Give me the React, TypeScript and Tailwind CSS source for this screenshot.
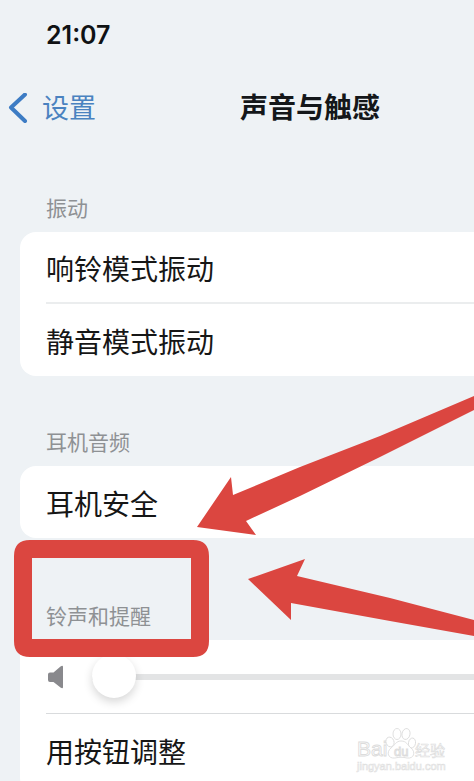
import React from "react";

function Chevron() {
  return (
    <svg width="20" height="32" viewBox="0 0 20 32" fill="none" aria-hidden="true">
      <path d="M17 1.5 L3 14.500 L17 28" stroke="#3d7cc4" strokeWidth="4" strokeLinecap="round" strokeLinejoin="round" />
    </svg>
  );
}

function Speaker() {
  return (
    <svg width="18" height="26" viewBox="0 0 18 26" aria-hidden="true">
      <path d="M4 8.5 H7.5 L14.5 2.5 Q17 0.8 17 3 V23 Q17 25.2 14.5 23.5 L7.5 18 H4 Q2 18 2 16 V10.5 Q2 8.5 4 8.5 Z" fill="#89898d" />
    </svg>
  );
}

function SectionLabel({ children, tall = false }: { children: React.ReactNode; tall?: boolean }) {
  return (
    <h2 className={`flex items-end pb-2 pl-[46px] text-[21px] leading-[30px] text-[#8e9194] ${tall ? "h-[102px]" : "h-[90px]"}`}>
      {children}
    </h2>
  );
}

function Row({ children }: { children: React.ReactNode }) {
  return (
    <button type="button" className="block h-[72px] w-full pt-2 text-left text-[28px] leading-10 text-[#161616]">
      {children}
    </button>
  );
}

function Watermark() {
  return (
    <svg className="absolute right-6 bottom-2" width="96" height="60" viewBox="0 0 96 60" aria-label="Baidu">
      <g fill="#fff" stroke="#dcdcdc" strokeWidth="0.9">
        <text x="3" y="30" fontSize="21" className="font-['Liberation_Sans',sans-serif]">Bai</text>
        <ellipse cx="36" cy="16" rx="4" ry="5" transform="rotate(-20 36 16)" />
        <ellipse cx="43" cy="8" rx="4" ry="5.5" />
        <ellipse cx="52" cy="8" rx="4" ry="5.5" transform="rotate(12 52 8)" />
        <ellipse cx="58" cy="17" rx="3.500" ry="5" transform="rotate(10 58 17)" />
        <path d="M47 15 C42 15 41 19 37 22 C32 26 34 33 41 32 C45 31 49 31 53 32 C60 33 62 26 57 22 C53 19 53 15 47 15 Z" />
        <text x="40" y="30" fontSize="13" className="font-['Liberation_Sans',sans-serif]">du</text>
        <text x="61" y="30" fontSize="15" strokeWidth="0.6" className="font-['Noto_Sans_CJK_SC',sans-serif]">经验</text>
      </g>
      <text x="3" y="44" fontSize="11" fill="#fff" stroke="#e0e0e0" strokeWidth="0.6" className="font-['Liberation_Sans',sans-serif]">
        jingyan.baidu.com
      </text>
    </svg>
  );
}

export default function App() {
  return (
    <div className="relative min-h-screen overflow-hidden bg-[#eef2f5] font-['Liberation_Sans','Noto_Sans_CJK_SC',sans-serif]">
      <div className="flex h-[72px] items-center pl-[46px] font-['Inter',sans-serif] text-[25px] font-semibold text-[#101214]">
        21:07
      </div>
      <header className="flex h-[70px] items-center gap-36 pt-1 pl-2">
        <a href="#settings" className="flex items-center gap-3.5 text-[27px] leading-10 text-[#4a82c0]">
          <Chevron />
          <span>设置</span>
        </a>
        <h1 className="text-[28px] leading-10 font-bold text-[#14171a]">声音与触感</h1>
      </header>

      <main>
        <SectionLabel>振动</SectionLabel>
        <section className="ml-5 divide-y-2 divide-[#ebedee] rounded-l-2xl bg-white pl-[26px]">
          <Row>响铃模式振动</Row>
          <Row>静音模式振动</Row>
        </section>

        <SectionLabel>耳机音频</SectionLabel>
        <section className="ml-5 rounded-l-2xl bg-white pl-[26px]">
          <Row>耳机安全</Row>
        </section>

        <SectionLabel tall>铃声和提醒</SectionLabel>
        <section className="ml-5 rounded-l-2xl bg-white pb-2 pl-[26px]">
          <div className="flex h-[74px] items-center gap-7 border-b border-[#d9dbdd]">
            <Speaker />
            <input
              type="range"
              aria-label="铃声和提醒"
              defaultValue={0}
              className="h-11 min-w-0 flex-1 appearance-none bg-transparent [&::-webkit-slider-runnable-track]:h-1.5 [&::-webkit-slider-runnable-track]:bg-[#e3e4e5] [&::-webkit-slider-thumb]:-mt-5 [&::-webkit-slider-thumb]:h-11 [&::-webkit-slider-thumb]:w-11 [&::-webkit-slider-thumb]:appearance-none [&::-webkit-slider-thumb]:rounded-full [&::-webkit-slider-thumb]:bg-white [&::-webkit-slider-thumb]:shadow-[0_4px_10px_rgba(0,0,0,0.16)]"
            />
          </div>
          <Row>用按钮调整</Row>
        </section>
      </main>

      <svg className="pointer-events-none absolute top-[540px] left-[14px]" width="195" height="117" viewBox="0 0 195 117" aria-hidden="true">
        <path fillRule="evenodd" fill="#db4640" d="M16 0 H179 Q195 0 195 16 V101 Q195 117 179 117 H16 Q0 117 0 101 V16 Q0 0 16 0 Z M18 18 V99 H177 V18 Z" />
      </svg>
      <svg className="pointer-events-none absolute top-[390px] left-[190px]" width="284" height="260" viewBox="0 0 284 260" aria-hidden="true">
        <path fill="#db4640" d="M7 137 L41 87 L43 105 L110 77 L190 46 L284 6 V20 L190 67 L110 106 L56 131 L66 145 Z" />
        <path fill="#db4640" d="M58 189 L115 169 L107 186 L200 208 L284 230 V246 L200 231 L101 213 L101 230 Z" />
      </svg>
      <Watermark />
    </div>
  );
}
